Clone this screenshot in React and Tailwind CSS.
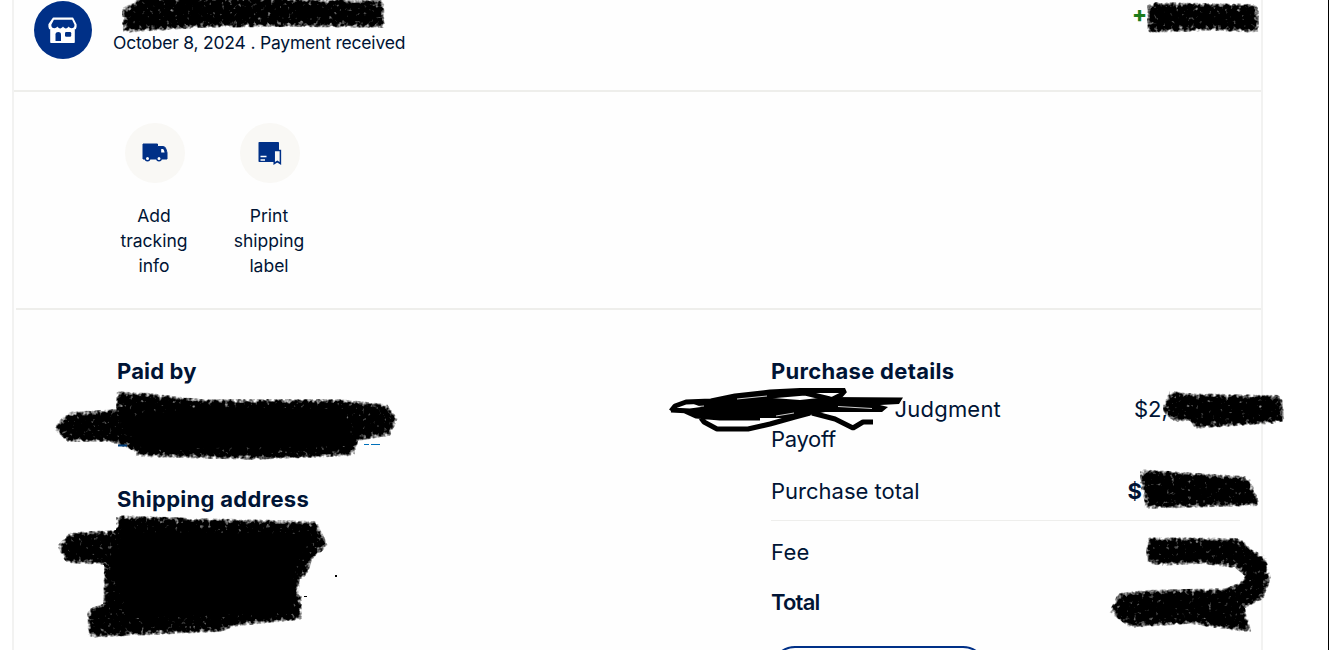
import React from 'react';

const StoreIcon = () => (
  <svg className="w-[30px] h-[27px]" viewBox="0 0 30 27" fill="none">
    <path d="M5.5 1.2h19l3.3 6.3v2.2c0 1.2-.8 2.1-1.8 2.4v13.2H3V12.1c-1-.3-1.8-1.2-1.8-2.4V7.5z" fill="#fff" stroke="#fff" strokeWidth="1.6" strokeLinejoin="round" />
    <path d="M5.9 2.8h18.2l2.4 5c.4 4-4.4 4.6-5.8 1.8-1.3 2.4-4.4 2.4-5.7 0-1.3 2.4-4.4 2.4-5.7 0C7.9 12.4 2.9 11.8 3.3 7.8z" fill="#003087" />
    <path d="M7.5 24v-6.5c0-3.2 5.5-3.2 5.5 0V24z" fill="#003087" />
    <rect x="17" y="15" width="6.2" height="4.8" rx="1.2" fill="#003087" />
  </svg>
);

const TruckIcon = () => (
  <svg className="w-[26px] h-[20px]" viewBox="0 0 26 20" fill="none">
    <path d="M1 1h14.5v2.5h6c1.5 0 2.5 2 3.5 6.2V16H1z" fill="#003087" stroke="#003087" strokeLinejoin="round" />
    <path d="M19.2 6h1.5c.9 0 1.4 1.3 1.9 3.6h-3.4z" fill="#fff" />
    <circle cx="5.5" cy="15.6" r="2.2" fill="#fff" stroke="#003087" strokeWidth="1.4" />
    <circle cx="17" cy="15.6" r="2.2" fill="#fff" stroke="#003087" strokeWidth="1.4" />
  </svg>
);

const LabelIcon = () => (
  <svg className="w-[24px] h-[24px]" viewBox="0 0 24 24" fill="none">
    <rect x="0.5" y="1" width="20.5" height="20" rx="0.8" fill="#003087" />
    <path d="M2.5 15.5h6M2.5 19h4.5" stroke="#fff" strokeWidth="1.6" />
    <path d="M16.2 9.5h6.2v13l-3.1-2-3.1 2z" fill="#f9f8f5" stroke="#003087" strokeWidth="1.5" />
  </svg>
);

const actions = [
  { icon: <TruckIcon />, lines: ['Add', 'tracking', 'info'] },
  { icon: <LabelIcon />, lines: ['Print', 'shipping', 'label'] }
];

const marks = [
  '122,8 132,3 142,-5 384,0 385,28 290,27 200,28 125,33 122,31',
  '1147,5 1155,2 1259,4 1259,33 1215,31 1147,33',
  '53,428 67,412 116,409 116,391 150,393 200,399 340,399 387,404 398,419 390,436 358,441 355,456 260,460 136,457 134,451 110,442 67,442',
  '57,546 70,532 116,530 116,515 200,518 318,521 320,529 329,545 312,560 307,577 300,579 299,595 302,596 302,620 240,626 220,632 88,638 87,609 103,604 104,565 66,563',
  '1163,405 1170,390 1185,393 1282,395 1285,423 1195,429 1190,421 1175,422 1163,414',
  '1140,469 1245,476 1251,480 1261,506 1145,509 1144,499 1140,485',
  '1146,537 1241,538 1251,549 1266,556 1271,578 1264,599 1245,608 1252,633 1215,628 1190,624 1130,628 1109,612 1118,593 1145,590 1225,588 1239,583 1245,576 1235,568 1200,564 1161,566 1146,563'
];

{/* Charcoal strokes over private values */}
const Redactions = () => (
  <svg className="absolute inset-0 w-[1329px] h-[650px] pointer-events-none" viewBox="0 0 1329 650">
    <defs>
      <filter id="charcoal" filterUnits="userSpaceOnUse" x="0" y="-20" width="1329" height="690" colorInterpolationFilters="sRGB">
        <feGaussianBlur in="SourceAlpha" stdDeviation="3.2" result="soft" />
        <feTurbulence type="fractalNoise" baseFrequency="0.24" numOctaves="2" seed="4" result="noise" />
        <feComposite in="soft" in2="noise" operator="arithmetic" k1="0" k2="0.52" k3="0.48" k4="0" />
        <feColorMatrix values="0 0 0 0 0  0 0 0 0 0  0 0 0 0 0  0 0 0 4.6 -2.15" result="grain" />
        <feComposite in="grain" in2="SourceAlpha" operator="in" result="cut" />
        <feGaussianBlur in="cut" stdDeviation="0.55" />
      </filter>
    </defs>
    <g filter="url(#charcoal)">
      {marks.map((points) => (
        <polygon key={points} points={points} />
      ))}
    </g>
    {/* Dense middle of the larger strokes */}
    <path d="M122 418L200 407L345 409L352 446L142 449ZM110 570L125 532L312 534L292 575L294 612L130 618Z" />
    <rect x="335" y="575" width="2" height="2" />
    <rect x="304" y="596" width="3" height="1" />
    <path d="M364 444.5h5M371 444.5h9" stroke="#0070ba" />
    <path d="M118 445.5h9" stroke="#003f7d" strokeWidth="2" />

    {/* Marker scribble */}
    <path d="M686 401L711 400L735 396L760 397L800 400L828 397L903 397.5L899 404L880 405L888 407L882 412L825 412L795 418L725 418L697 416L684 411L704 408Z" />
    <path d="M671 411L675 406L686 402L711 401L735 396L770 392L800 390.5L845 390.5L841 395L833 399M671 410L690 411L705 409M685 411L696 416L720 418L760 418M701 418L704 422L717 429L748 429L770 424L795 417L810 413M735 402L770 396L805 393L830 399L862 404M812 413L835 419L853 428L863 422L873 422" fill="none" stroke="#000" strokeWidth="5" strokeLinejoin="bevel" />
    <path d="M690 407l14-1M737 399l30-3M838 406.5l34 2M776 416l18-3" stroke="#fff" strokeWidth="0.8" />
  </svg>
);

const App = () => {
  return (
    <div className="relative flex justify-between w-full h-[650px] overflow-hidden bg-white font-['Inter','Liberation_Sans',sans-serif] text-[#001435]">
      <main className="ml-3 w-[1251px] h-full border-x-2 border-[#f2f2f1] bg-[#fefefe]">

        {/* Transaction header */}
        <header className="flex h-[92px] border-b-2 border-[#eeeeeb]">
          <div className="mt-px ml-5 flex w-[58px] h-[58px] shrink-0 items-center justify-center rounded-full bg-[#003087]">
            <StoreIcon />
          </div>
          <p className="ml-[21px] mt-[31px] text-[17.5px] leading-6 tracking-[-0.2px] whitespace-nowrap">October 8, 2024 . Payment received</p>
          <span className="ml-auto mr-[114px] text-[22px] leading-7 font-extrabold text-[#1c7c1c]">+</span>
        </header>

        {/* Shipping actions */}
        <section className="ml-0.5 flex h-[218px] gap-[35px] border-b-2 border-[#eeeeeb] pl-[98px] pt-[31px]">
          {actions.map((action) => (
            <button key={action.lines[0]} className="flex w-20 flex-col items-center text-[17.5px] leading-[25px]">
              <span className="ml-px mb-5 flex w-[60px] h-[60px] items-center justify-center rounded-full bg-[#f9f8f5]">{action.icon}</span>
              {action.lines.map((line) => (
                <span key={line}>{line}</span>
              ))}
            </button>
          ))}
        </section>

        <section className="flex pl-[103px] pt-[46px]">
          {/* Buyer */}
          <div className="w-[654px] text-[22px] leading-[30px] font-bold tracking-[0.3px]">
            <h2 className="tracking-[0.15px]">Paid by</h2>
            <h2 className="mt-[98px]">Shipping address</h2>
          </div>

          {/* Purchase */}
          <div className="w-[469px] text-[22px] leading-[30px]">
            <h2 className="font-bold tracking-[0.3px]">Purchase details</h2>
            <div className="mt-2 flex">
              <div className="w-[230px]">
                <p className="text-right tracking-[0.2px]">Judgment</p>
                <p className="tracking-[-0.3px]">Payoff</p>
              </div>
              <p className="ml-[133px]">$2,</p>
            </div>
            <div className="mt-[22px] flex h-[45px] border-b border-[#eeeeec]">
              <p>Purchase total</p>
              <p className="ml-auto mr-[98px] font-bold">$</p>
            </div>
            <p className="mt-4 tracking-[0.3px]">Fee</p>
            <p className="mt-5 font-semibold tracking-[-0.8px]">Total</p>
            <button className="mt-[29px] block w-[216px] h-12 rounded-full border-2 border-[#003087]" aria-label="Details" />
          </div>
        </section>
      </main>
      <div className="w-px bg-black" />
      <Redactions />
    </div>
  );
};

export default App;
